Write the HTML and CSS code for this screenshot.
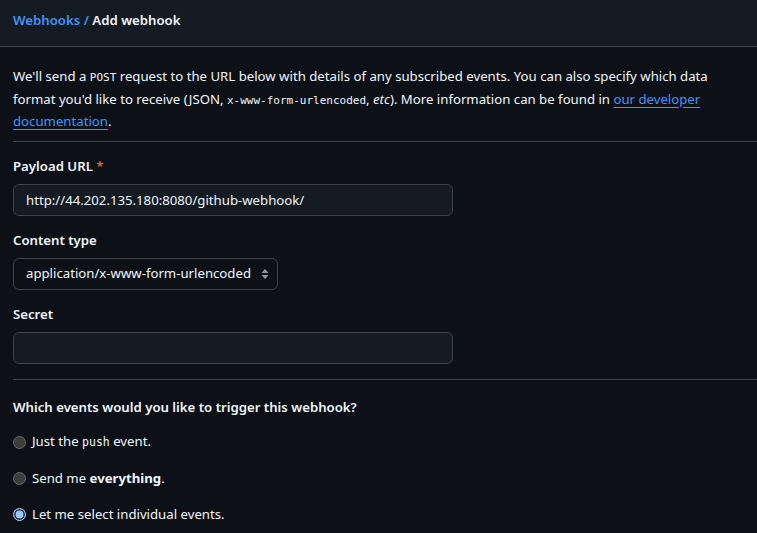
FILE: index.html
```html
<!DOCTYPE html>
<html lang="en">
<head>
<meta charset="utf-8">
<title>Add webhook</title>
<link rel="stylesheet" href="styles.css">
</head>
<body>
<header class="subhead">
  <h2 class="crumbs"><a class="crumb-link" href="#">Webhooks</a><span class="crumb-sep"> / </span><span class="crumb-current">Add webhook</span></h2>
</header>
<main class="content">
  <p class="intro">We'll send a <code class="mono">POST</code> request to the URL below with details of any subscribed events. You can also specify which data<br>format you'd like to receive (JSON, <code class="mono">x-www-form-urlencoded</code>, <em>etc</em>). More information can be found in <a class="link" href="#">our developer<br>documentation</a>.</p>
  <hr class="divider">
  <div class="field">
    <label class="label">Payload URL <span class="req">*</span></label>
    <input class="input input-wide" type="text" value="http://44.202.135.180:8080/github-webhook/">
  </div>
  <div class="field">
    <label class="label">Content type</label>
    <div class="select">
      <span class="select-text">application/x-www-form-urlencoded</span>
      <svg class="select-arrows" width="8" height="12" viewBox="0 0 8 12"><path d="M4 1 L7.5 5 L0.5 5 Z M4 11 L7.5 7 L0.5 7 Z" fill="#9198a1"/></svg>
    </div>
  </div>
  <div class="field">
    <label class="label">Secret</label>
    <input class="input input-wide" type="text" value="">
  </div>
  <hr class="divider divider-2">
  <h3 class="question">Which events would you like to trigger this webhook?</h3>
  <div class="radios">
    <div class="radio-row"><span class="radio"></span><span class="radio-text">Just the <code class="mono mono-push">push</code> event.</span></div>
    <div class="radio-row"><span class="radio"></span><span class="radio-text">Send me <strong>everything</strong>.</span></div>
    <div class="radio-row"><span class="radio radio-checked"></span><span class="radio-text">Let me select individual events.</span></div>
  </div>
</main>
</body>
</html>
```
FILE: styles.css
```css
* { box-sizing: border-box; }
html, body { margin: 0; padding: 0; }
body {
  background: #0d1117;
  color: #f0f6fc;
  font-family: "Noto Sans", "Liberation Sans", sans-serif;
  font-size: 13.2px;
  line-height: 20.5px;
  overflow: hidden;
}
.subhead {
  height: 47px;
  background: #151b23;
  border-bottom: 1px solid #3d444d;
  display: flex;
  align-items: center;
  padding: 0 13px 6px;
}
.crumbs {
  margin: 0;
  font-size: 13.2px;
  font-weight: 600;
  line-height: 20px;
}
.crumb-link { color: #4493f8; text-decoration: none; }
.crumb-sep { color: #4493f8; }
.crumb-current { color: #f0f6fc; }
.content {
  padding: 19px 0 0 13px;
}
.intro {
  margin: 0;
  line-height: 20.5px;
  color: #f0f6fc;
  white-space: nowrap;
}
.mono {
  font-family: "DejaVu Sans Mono", "Liberation Mono", monospace;
  font-size: 11px;
}
.link { color: #4493f8; text-decoration: underline; text-underline-offset: 3px; }
.divider {
  border: 0;
  border-top: 1px solid #3d444d;
  margin: 9px 0 0;
  height: 0;
}
.field {
  margin-top: 14px;
  display: flex;
  flex-direction: column;
  align-items: flex-start;
}
.label {
  font-weight: 600;
  line-height: 21px;
  margin-bottom: 7px;
}
.req { color: #f85149; }
.input {
  height: 32px;
  background: #151b23;
  border: 1px solid #3d444d;
  border-radius: 6px;
  color: #f0f6fc;
  font-family: inherit;
  font-size: 13.2px;
  padding: 0 12px;
  outline: none;
}
.input-wide { width: 440px; }
.select {
  height: 32px;
  width: 265px;
  border: 1px solid #3d444d;
  border-radius: 6px;
  background: #0d1117;
  display: flex;
  align-items: center;
  justify-content: space-between;
  padding: 0 8px 0 12px;
  white-space: nowrap;
}
.select-arrows { margin-top: 1px; }
.divider-2 { margin-top: 15px; }
.question {
  margin: 17px 0 0;
  font-size: 13.2px;
  font-weight: 600;
  line-height: 21px;
}
.radios {
  margin-top: 14px;
  display: flex;
  flex-direction: column;
  gap: 15px;
}
.radio-row {
  display: flex;
  align-items: center;
  gap: 6px;
  height: 21px;
  line-height: 21px;
}
.radio {
  width: 13px;
  height: 13px;
  border-radius: 50%;
  background: #3d3d3d;
  border: 1px solid #666a70;
  flex: none;
}
.radio-checked {
  background: #99c8ff;
  border: 1px solid #a8c6ea;
  box-shadow: inset 0 0 0 1.5px #20252e;
}
.mono-push { font-size: 11.5px; }
```
